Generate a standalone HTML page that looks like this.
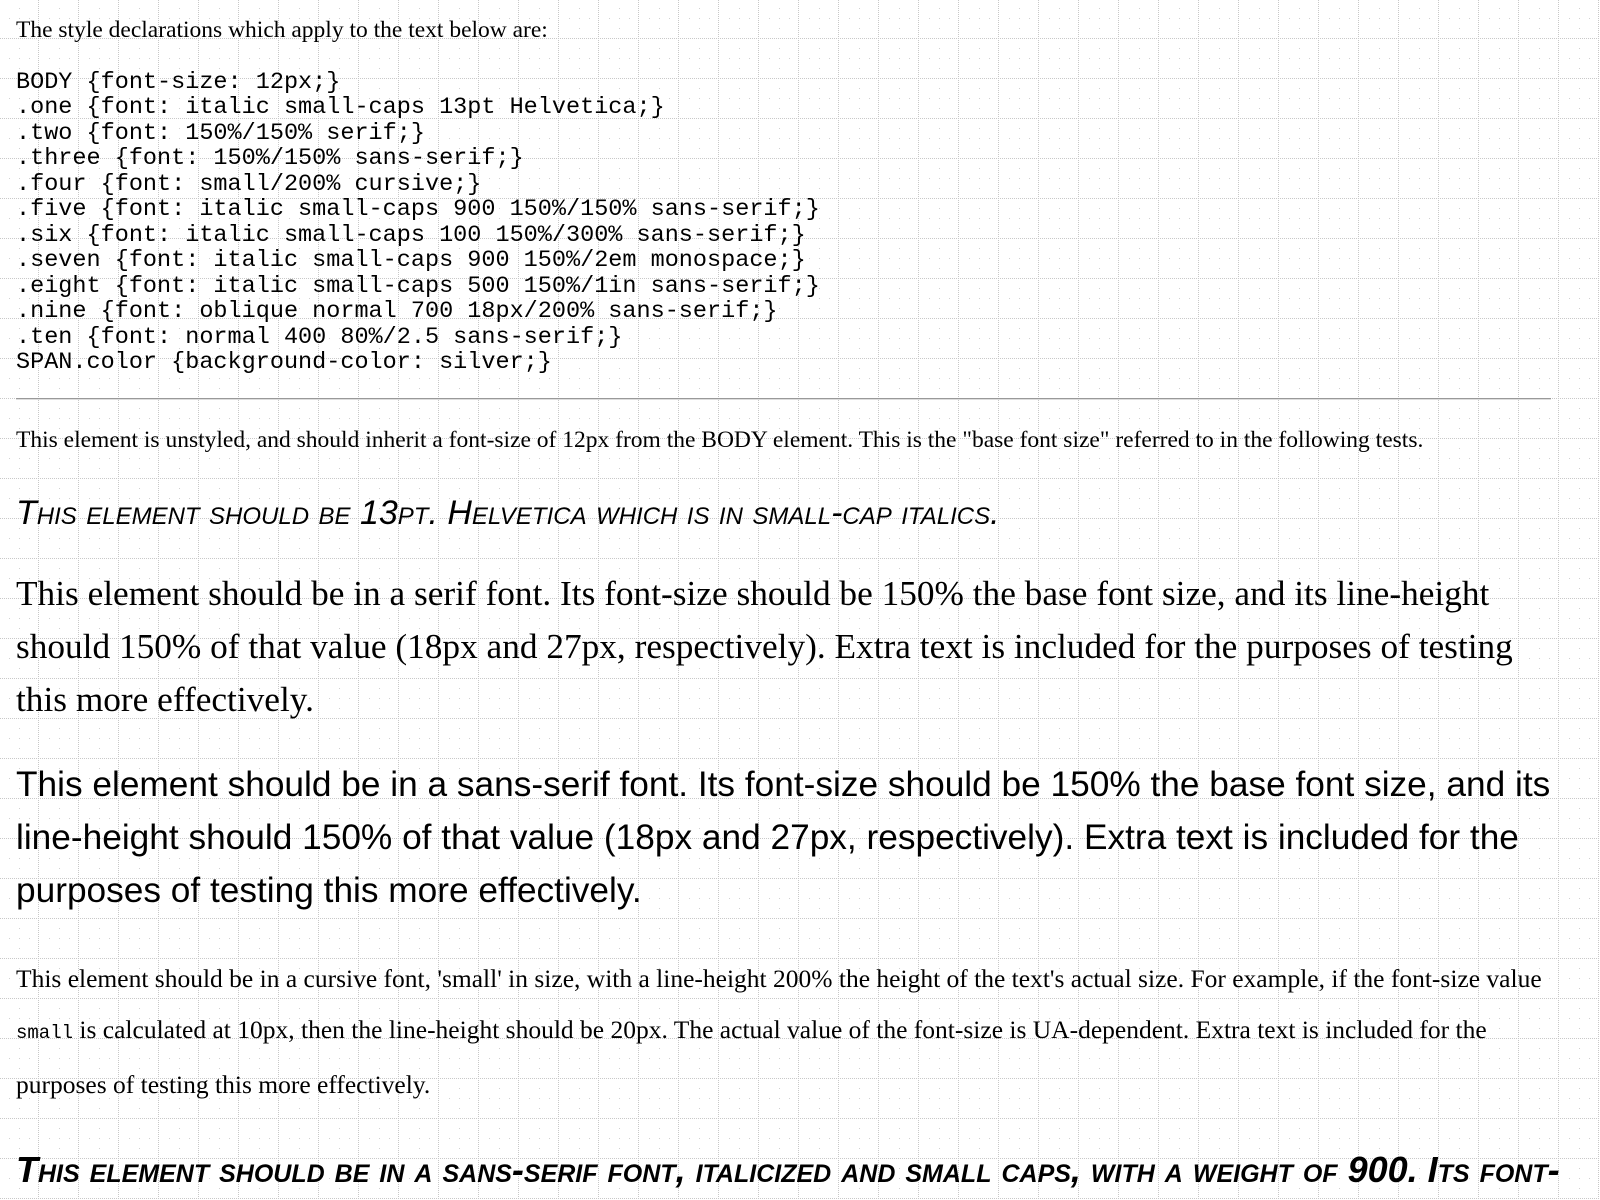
<!DOCTYPE html>
<html><head><meta charset="utf-8">
<style>
html,body{margin:0;padding:0;background:#fff;}
body{width:1600px;height:1200px;overflow:hidden;position:relative;color:#000;}
.bg{position:absolute;left:0;top:0;}
.b{position:absolute;left:16px;white-space:nowrap;margin:0;}
.ser{font-family:"Liberation Serif",serif;}
.san{font-family:"Liberation Sans",sans-serif;}
.mono{font-family:"Liberation Mono",monospace;}
</style></head><body>
<svg class="bg" width="1600" height="1200" xmlns="http://www.w3.org/2000/svg">
<defs>
<pattern id="dl" x="0" y="0" width="2" height="2" patternUnits="userSpaceOnUse"><rect width="1" height="1" fill="#c8c8c8"/></pattern>
<pattern id="g" x="0" y="0" width="40" height="40" patternUnits="userSpaceOnUse">
<rect x="38" y="0" width="1" height="40" fill="url(#dl)"/>
<rect x="0" y="38" width="40" height="1" fill="url(#dl)"/>
<rect x="19" y="8" width="1" height="1" fill="#d0d0d0"/>
<rect x="9" y="18" width="1" height="1" fill="#d0d0d0"/>
<rect x="19" y="18" width="1" height="1" fill="#d0d0d0"/>
<rect x="29" y="18" width="1" height="1" fill="#d0d0d0"/>
<rect x="19" y="28" width="1" height="1" fill="#d0d0d0"/>
</pattern>
</defs>
<rect width="1600" height="1200" fill="url(#g)"/>
</svg>

<div class="b ser" style="top:17px;font-size:23.5px;line-height:26px;">The style declarations which apply to the text below are:</div>

<pre class="b mono" style="top:70px;font-size:23.5px;line-height:25.45px;white-space:pre;">BODY {font-size: 12px;}
.one {font: italic small-caps 13pt Helvetica;}
.two {font: 150%/150% serif;}
.three {font: 150%/150% sans-serif;}
.four {font: small/200% cursive;}
.five {font: italic small-caps 900 150%/150% sans-serif;}
.six {font: italic small-caps 100 150%/300% sans-serif;}
.seven {font: italic small-caps 900 150%/2em monospace;}
.eight {font: italic small-caps 500 150%/1in sans-serif;}
.nine {font: oblique normal 700 18px/200% sans-serif;}
.ten {font: normal 400 80%/2.5 sans-serif;}
SPAN.color {background-color: silver;}</pre>

<div style="position:absolute;left:16px;top:398px;width:1535px;height:1px;background:#999;"></div>
<div style="position:absolute;left:16px;top:399px;width:1535px;height:1px;background:#ddd;"></div>

<div class="b ser" style="top:427px;font-size:23.5px;line-height:26px;">This element is unstyled, and should inherit a font-size of 12px from the BODY element. This is the "base font size" referred to in the following tests.</div>

<div class="b san" style="top:493px;font-size:34px;line-height:40px;font-style:italic;font-variant:small-caps;">This element should be 13pt. Helvetica which is in small-cap italics.</div>

<div class="b ser" style="top:567px;font-size:35.3px;line-height:53px;">This element should be in a serif font. Its font-size should be 150% the base font size, and its line-height<br>should 150% of that value (18px and 27px, respectively). Extra text is included for the purposes of testing<br>this more effectively.</div>

<div class="b san" style="top:758px;font-size:35.25px;line-height:53px;">This element should be in a sans-serif font. Its font-size should be 150% the base font size, and its<br>line-height should 150% of that value (18px and 27px, respectively). Extra text is included for the<br>purposes of testing this more effectively.</div>

<div class="b ser" style="top:965px;font-size:25.5px;line-height:28px;">This element should be in a cursive font, 'small' in size, with a line-height 200% the height of the text's actual size. For example, if the font-size value</div>
<div class="b ser" style="top:1016px;font-size:25.5px;line-height:28px;"><span class="mono" style="font-size:19px;">small</span> is calculated at 10px, then the line-height should be 20px. The actual value of the font-size is UA-dependent. Extra text is included for the</div>
<div class="b ser" style="top:1071px;font-size:25.5px;line-height:28px;">purposes of testing this more effectively.</div>

<div class="b san" style="top:1143px;font-size:36px;line-height:53px;font-style:italic;font-weight:900;font-variant:small-caps;">This element should be in a sans-serif font, italicized and small caps, with a weight of 900. Its font-</div>
</body></html>
